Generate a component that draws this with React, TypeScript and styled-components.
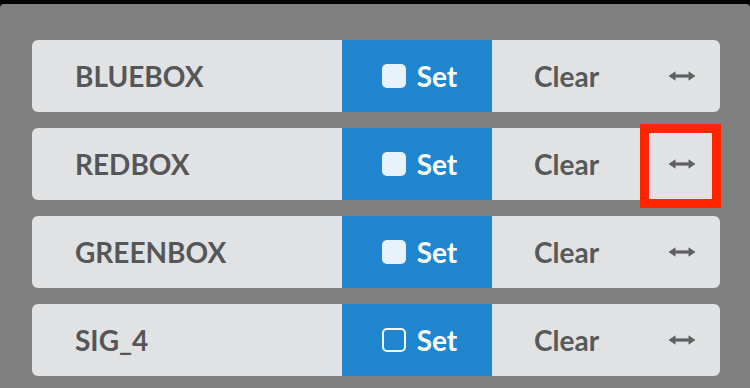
import styled, { createGlobalStyle } from 'styled-components'

const GlobalStyle = createGlobalStyle`
    html, body {
        margin: 0;
        padding: 0;
        background: #000;
    }
    body {
        font-family: Lato, 'Liberation Sans', sans-serif;
    }
`

const Screen = styled.div`
    margin-top: 4px;
    height: 384px;
    background: #808080;
    border-radius: 4px 4px 0 0;
    padding: 36px 30px 0 32px;
    box-sizing: border-box;
    display: flex;
    flex-direction: column;
    gap: 16px;
`

const Row = styled.div`
    position: relative;
    height: 72px;
    display: grid;
    grid-template-columns: 310px 150px 1fr 80px;
    background: #e1e2e4;
    border-radius: 6px;
`

const Label = styled.div`
    display: flex;
    align-items: center;
    padding-left: 43px;
    font-size: 28px;
    font-weight: 700;
    color: #555657;
`

const SetButton = styled.div`
    display: flex;
    align-items: center;
    justify-content: center;
    gap: 11px;
    background: #2086d0;
    color: #fff;
    font-size: 28px;
    font-weight: 700;
    padding-left: 5px;
`

const Check = styled.span<{ filled: boolean }>`
    width: 24px;
    height: 24px;
    box-sizing: border-box;
    border-radius: 5px;
    background: ${({ filled }) => (filled ? '#e8f2fb' : 'transparent')};
    border: ${({ filled }) => (filled ? 'none' : '2px solid #f2f7fc')};
`

const ClearButton = styled.div`
    display: flex;
    align-items: center;
    padding-left: 42px;
    font-size: 28px;
    font-weight: 700;
    color: #58595a;
`

const Resize = styled.div`
    display: flex;
    align-items: center;
    justify-content: flex-start;
    padding-left: 28px;
    color: #5f6061;
`

const Highlight = styled.div`
    position: absolute;
    top: -4px;
    right: -1px;
    width: 81px;
    height: 84px;
    box-sizing: border-box;
    border: 9px solid #ff2600;
    pointer-events: none;
`

function ArrowIcon() {
    return (
        <svg width="28" height="12" viewBox="0 0 28 12">
            <path d="M4 6 H24" stroke="currentColor" strokeWidth="3.2" />
            <path d="M0.5 6 L7.5 1.2 V10.8 Z" fill="currentColor" />
            <path d="M27.5 6 L20.5 1.2 V10.8 Z" fill="currentColor" />
        </svg>
    )
}

const signals = [
    { name: 'BLUEBOX', on: true },
    { name: 'REDBOX', on: true, selected: true },
    { name: 'GREENBOX', on: true },
    { name: 'SIG_4', on: false },
]

export default function App() {
    return (
        <>
            <GlobalStyle />
            <Screen>
                {signals.map((s) => (
                    <Row key={s.name}>
                        <Label>{s.name}</Label>
                        <SetButton>
                            <Check filled={s.on} />
                            Set
                        </SetButton>
                        <ClearButton>Clear</ClearButton>
                        <Resize>
                            <ArrowIcon />
                        </Resize>
                        {s.selected && <Highlight />}
                    </Row>
                ))}
            </Screen>
        </>
    )
}
